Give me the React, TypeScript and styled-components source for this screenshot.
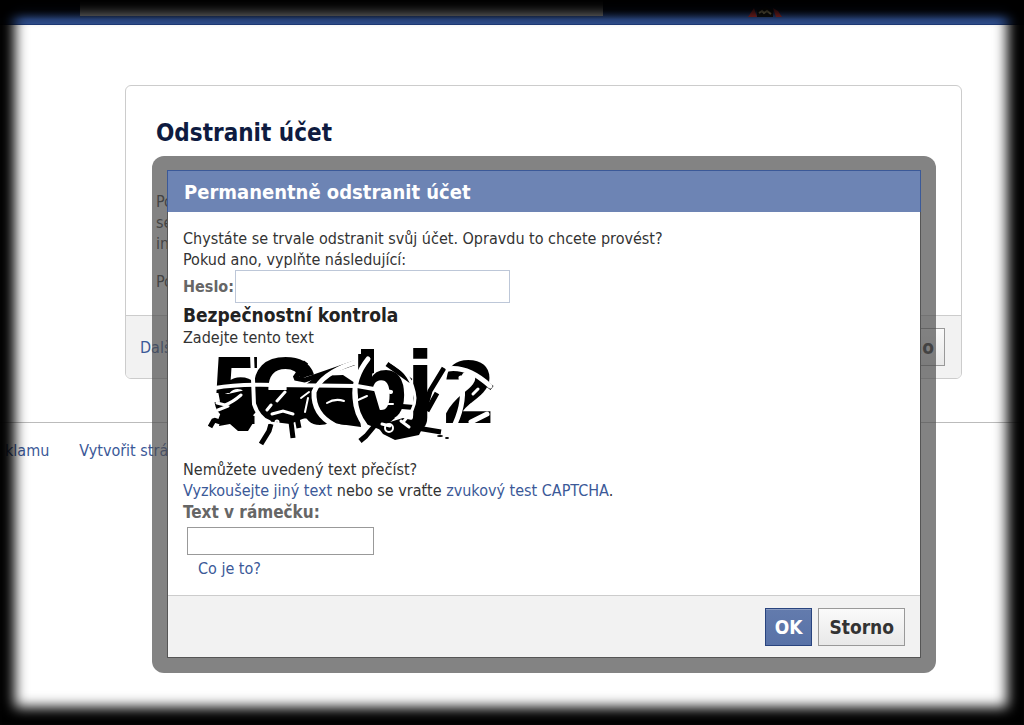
import React from "react";
import styled, { createGlobalStyle, css } from "styled-components";

const GlobalStyle = createGlobalStyle`
  *, *::before, *::after { box-sizing: border-box; }
  body {
    margin: 0;
    background: #fff;
    color: #333;
    font: 16px/21px "DejaVu Sans Condensed", "DejaVu Sans", Tahoma, sans-serif;
  }
  h1, h2, h3, p { margin: 0; }
`;

const Page = styled.div`
  position: relative;
  min-height: 100vh;
  overflow: hidden;
`;

const TopBar = styled.header`
  display: flex;
  align-items: flex-start;
  height: 25px;
  padding: 0 80px;
  background: linear-gradient(#0a1020 40%, #2f4f8f 80%);
  border-bottom: 1px solid #1d3a78;
`;

const SearchStrip = styled.div`
  flex: 0 1 523px;
  height: 16px;
  background: #747474;
`;

const Badge = styled.svg`
  margin: 6px 0 0 144px;
`;

const Card = styled.main`
  margin: 60px 62px 0 125px;
  border: 1px solid #ccc;
  border-radius: 6px;
  overflow: hidden;
`;

const CardBody = styled.div`
  height: 229px;
  padding: 31px 30px 0;
`;

const CardTitle = styled.h1`
  margin-bottom: 42px;
  color: #0e1b40;
  font-size: 24px;
  line-height: 32px;
`;

const CardText = styled.p`
  margin-bottom: 17px;
`;

const CardFooter = styled.div`
  display: flex;
  align-items: center;
  justify-content: space-between;
  height: 63px;
  padding: 0 16px 0 14px;
  background: #f2f2f2;
  border-top: 1px solid #ccc;
`;

const Link = styled.a`
  color: #3b5998;
  text-decoration: none;
`;

const PageFooter = styled.footer`
  display: flex;
  gap: 30px;
  margin-top: 43px;
  padding: 17px 0 0 5px;
  border-top: 1px solid #bbb;
`;

const Overlay = styled.div`
  position: absolute;
  inset: 0;
  padding: 156px 88px 0 152px;
`;

const Frame = styled.div`
  padding: 14px 15px 15px;
  border-radius: 12px;
  background: rgba(76, 76, 76, 0.69);
`;

const Dialog = styled.section`
  border: 1px solid #555;
  border-top: 0;
  background: #fff;
`;

const DialogHeader = styled.h2`
  margin: 0 -1px;
  padding: 7px 16px 6px;
  border: 1px solid #3b5998;
  border-bottom: 0;
  background: #6d84b4;
  color: #fff;
  font-size: 20px;
  line-height: 28px;
`;

const DialogBody = styled.form`
  padding: 16px 15px;
`;

const Field = styled.div`
  display: flex;
  align-items: center;
  gap: 1px;
`;

const Label = styled.label<{ $large?: boolean }>`
  color: #666;
  font-size: ${(p) => (p.$large ? 17 : 16)}px;
  font-weight: bold;
  line-height: 23px;
`;

const TextInput = styled.input<{ $tall?: boolean }>`
  width: ${(p) => (p.$tall ? 275 : 187)}px;
  height: ${(p) => (p.$tall ? 33 : 28)}px;
  padding: 0 6px;
  border: 1px solid ${(p) => (p.$tall ? "#bdc7d8" : "#999")};
  background: #fff;
  font: inherit;
`;

const SectionTitle = styled.h3`
  color: #222;
  font-size: 19px;
  line-height: 24px;
`;

const Captcha = styled.svg`
  display: block;
  margin: 0 0 11px 22px;
`;

const CaptchaField = styled.div`
  display: flex;
  flex-direction: column;
  align-items: flex-start;
  gap: 3px;
`;

const Indent = styled.div<{ $by: number }>`
  padding-left: ${(p) => p.$by}px;
`;

const DialogFooter = styled.footer`
  display: flex;
  justify-content: flex-end;
  gap: 6px;
  padding: 12px 15px 11px;
  background: #f2f2f2;
  border-top: 1px solid #ccc;
`;

const Button = styled.button<{ $primary?: boolean }>`
  height: 38px;
  padding: 0 10px;
  border: 1px solid #999;
  background: linear-gradient(#fafafa, #e8e8e8);
  color: #333;
  font: bold 19px/24px "DejaVu Sans Condensed", "DejaVu Sans", Tahoma, sans-serif;
  ${(p) =>
    p.$primary &&
    css`
      padding: 0 9px;
      border-color: #29447e;
      background: linear-gradient(#637bad, #5872a7);
      box-shadow: inset 0 1px 0 #8a9cc2;
      color: #fff;
    `}
`;

const Vignette = styled.div`
  position: fixed;
  inset: 0;
  box-shadow: inset -1px -2px 13px 16px #000;
  pointer-events: none;
`;

function CaptchaDrawing() {
  return (
    <Captcha width="290" height="100" viewBox="0 0 290 100" role="img" aria-label="CAPTCHA">
      <text
        x="8 46 98 148 203 239"
        y="70 71 75 70 64 74"
        fontFamily="Liberation Sans, sans-serif"
        fontWeight="bold"
        fontSize="88"
        stroke="#000"
        strokeWidth="2"
      >
        5Gabj2
      </text>
      <g fill="#000">
        <path d="M13 43l10 3 22-5 4 14-1 20-5 8-10 0-8-7-11 2 3-14z" />
        <path d="M51 42h49l5 26-20 8-24-3-10-12z" />
        <path d="M100 37l12-9 26-1 12 8 6 44-22-3-18-4-20-2z" />
        <path d="M156 1h13v24l-13 4z" />
        <path d="M152 40l14-8 10 34 14 4-14 12-20-8z" />
        <path d="M172 78l26-8 22 5-6 12-24 5-12-6z" />
      </g>
      <g fill="none" stroke="#000" strokeWidth="5" strokeLinejoin="bevel">
        <path d="M5 79l4-7 6 2 3-8 7 5M47 76v-8" />
        <path d="M66 76l-2 7-8 13M86 74l2 16M92 70l2 10M101 14L90 30l10 2L149 15" />
        <path d="M155 93l6-5 10-12M182 16l24 17M191 58l24 2M239 20l-14 23-8 28" />
        <path d="M232 45l-10 18M212 80l24 4M272 28l15 12" />
      </g>
      <g fill="none" stroke="#fff" strokeLinecap="round">
        <path d="M10 40q22-4 60-3l82 1 34 6" strokeWidth="4" />
        <path d="M47 6l2 50q5 15 15 18" strokeWidth="4" />
        <path d="M148 15q-32 11-39 29q-1 22 20 33" strokeWidth="5" />
        <path d="M163 11q-15 19-13 39q1 16 10 27" strokeWidth="5" />
        <path d="M186 14q22 12 24 36q0 12-11 23" strokeWidth="3" />
        <path d="M243 21q20-3 42 17" strokeWidth="5" />
        <path d="M256 30q5 22-6 46M282 66l-16 8" strokeWidth="5" />
        <path d="M12 55l8 2q8-3 16-10M13 62l10-4M72 53l8-9M66 57l-4 5" strokeWidth="3" />
        <path d="M122 55q8-5 17-2M96 50l8-6M100 64l3-14M153 52l9-4M176 56h12" strokeWidth="2" />
        <path d="M67 66l11-3 10 3M177 76l8 2M196 73l8 6M266 57l5 4M268 46l5-5" strokeWidth="3" />
        <circle cx="72" cy="74" r="1" strokeWidth="3" />
        <circle cx="184" cy="80" r="4" strokeWidth="2" />
      </g>
      <g fill="#000">
        <ellipse cx="235" cy="88" rx="3" ry="1" />
        <ellipse cx="242" cy="90" rx="2" ry="1" />
      </g>
    </Captcha>
  );
}

export default function App() {
  return (
    <>
      <GlobalStyle />
      <Page>
        <TopBar>
          <SearchStrip />
          <Badge width="36" height="12" viewBox="0 0 36 12" aria-hidden="true">
            <path d="M1 11L7 2l3 9zM26 2l3 9h6l-4-6z" fill="#8a2626" />
            <path d="M10 11V4l8-3 8 3v7z" fill="#101010" />
            <path d="M12 7l3-2 2 2 3-2 4 3" fill="none" stroke="#857a58" strokeWidth="2" />
          </Badge>
        </TopBar>
        <Card>
          <CardBody>
            <CardTitle>Odstranit účet</CardTitle>
            <CardText>
              Po
              <br />
              se
              <br />
              in
            </CardText>
            <CardText>Po</CardText>
          </CardBody>
          <CardFooter>
            <Link href="#">Dalš</Link>
            <Button type="button">Storno</Button>
          </CardFooter>
        </Card>
        <PageFooter>
          <Link href="#">klamu</Link>
          <Link href="#">Vytvořit strá</Link>
        </PageFooter>

        <Overlay>
          <Frame>
            <Dialog role="dialog" aria-labelledby="dialog-title">
              <DialogHeader id="dialog-title">Permanentně odstranit účet</DialogHeader>
              <DialogBody id="delete-form" onSubmit={(e) => e.preventDefault()}>
                <p>Chystáte se trvale odstranit svůj účet. Opravdu to chcete provést?</p>
                <p>Pokud ano, vyplňte následující:</p>
                <Field>
                  <Label htmlFor="password">Heslo:</Label>
                  <TextInput $tall id="password" type="password" />
                </Field>
                <SectionTitle>Bezpečnostní kontrola</SectionTitle>
                <p>Zadejte tento text</p>
                <CaptchaDrawing />
                <p>Nemůžete uvedený text přečíst?</p>
                <p>
                  <Link href="#">Vyzkoušejte jiný text</Link> nebo se vraťte{" "}
                  <Link href="#">zvukový test CAPTCHA</Link>.
                </p>
                <CaptchaField>
                  <Label $large htmlFor="captcha">
                    Text v rámečku:
                  </Label>
                  <Indent $by={4}>
                    <TextInput id="captcha" type="text" />
                  </Indent>
                  <Indent $by={15}>
                    <Link href="#">Co je to?</Link>
                  </Indent>
                </CaptchaField>
              </DialogBody>
              <DialogFooter>
                <Button $primary type="submit" form="delete-form">
                  OK
                </Button>
                <Button type="button">Storno</Button>
              </DialogFooter>
            </Dialog>
          </Frame>
        </Overlay>
      </Page>
      <Vignette />
    </>
  );
}
